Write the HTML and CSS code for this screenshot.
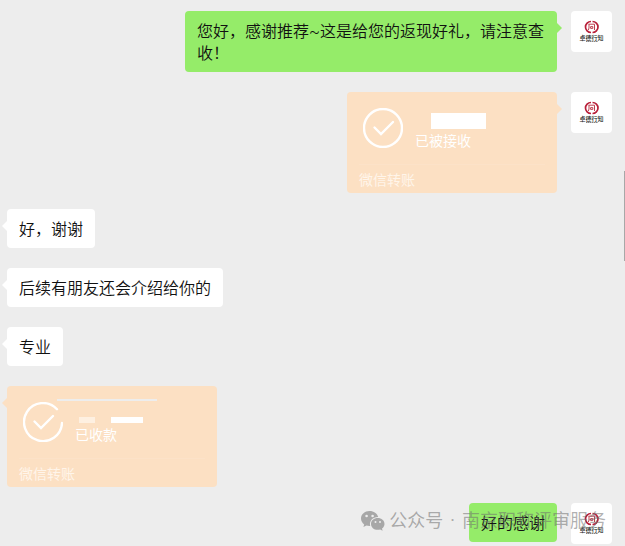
FILE: index.html
```html
<!DOCTYPE html>
<html lang="zh-CN">
<head>
  <meta charset="UTF-8">
  <meta name="viewport" content="width=device-width, initial-scale=1.0">
  <title>聊天记录</title>
  <link rel="stylesheet" href="styles.css">
</head>
<body>
  <svg class="defs" aria-hidden="true">
    <symbol id="logo" viewBox="0 0 41 41">
      <path d="M20 10.500a5.500 5.500 0 0 0 0 11M21.500 10.500a5.500 5.500 0 0 1 0 11" fill="none" stroke="#b8203a" stroke-width="1.700"/>
      <path d="M17.500 13.200h6v5.800M18 13.200v3.800l-.6 2M19.600 15.600h2.200v1.800h-2.200z" fill="none" stroke="#c04050" stroke-width="1"/>
      <text x="20.500" y="28.500" text-anchor="middle" class="logo-name">卓德行知</text>
      <path d="M15 30.500h12" stroke="#666" stroke-width=".8" stroke-dasharray="1.500 .4"/>
    </symbol>
  </svg>

  <main class="chat">
    <div class="row sent">
      <div class="bubble">您好，感谢推荐~这是给您的返现好礼，请注意查收！</div>
      <svg class="avatar"><use href="#logo"/></svg>
    </div>

    <div class="row sent transfer-row">
      <div class="transfer">
        <div class="transfer-main">
          <svg class="check" viewBox="0 0 40 40">
            <circle cx="20" cy="20" r="19"/>
            <path d="M11.500 19.500l6.500 6.500 12-12"/>
          </svg>
          <div class="info">
            <div class="amount"><span class="mask mask-large"></span></div>
            <div class="status">已被接收</div>
          </div>
        </div>
        <div class="transfer-foot">微信转账</div>
      </div>
      <svg class="avatar"><use href="#logo"/></svg>
    </div>

    <div class="row received">
      <div class="bubble">好，谢谢</div>
    </div>

    <div class="row received">
      <div class="bubble">后续有朋友还会介绍给你的</div>
    </div>

    <div class="row received">
      <div class="bubble">专业</div>
    </div>

    <div class="row received transfer-row">
      <div class="transfer">
        <span class="strip"></span>
        <div class="transfer-main">
          <svg class="check" viewBox="0 0 40 40">
            <path d="M34 7.200A19 19 0 1 0 39 21"/>
            <path d="M11.500 19.500l6.500 6.500 12-12"/>
          </svg>
          <div class="info">
            <div class="amount amount-split"><span class="mask mask-faint"></span><span class="mask mask-small"></span></div>
            <div class="status">已收款</div>
          </div>
        </div>
        <div class="transfer-foot">微信转账</div>
      </div>
    </div>

    <div class="row sent">
      <div class="bubble no-tail">好的感谢</div>
      <svg class="avatar"><use href="#logo"/></svg>
      <div class="watermark">
        <svg class="wechat" viewBox="0 0 24 20">
          <path fill-rule="evenodd" d="M8.500 0C3.800 0 0 3.300 0 7.500c0 2.400 1.300 4.500 3.200 5.900L2.400 16l3.100-1.600c1 .3 2 .5 3 .5h.7C8 10 11.800 6 17 6h.2C16.200 2.500 12.800 0 8.500 0zM5.600 3.700a1.300 1.300 0 1 1 0 2.600 1.300 1.300 0 0 1 0-2.600zM11.600 3.700a1.300 1.300 0 1 1 0 2.600 1.300 1.300 0 0 1 0-2.600z"/>
          <path fill-rule="evenodd" d="M16.700 7c-3.800 0-6.700 2.600-6.700 5.900s2.900 5.900 6.700 5.900c.9 0 1.700-.1 2.500-.4l2.400 1.300-.6-2.200c1.500-1.100 2.500-2.700 2.500-4.600C23.500 9.600 20.500 7 16.700 7zM14.500 10a1 1 0 1 1 0 2 1 1 0 0 1 0-2zM19 10a1 1 0 1 1 0 2 1 1 0 0 1 0-2z"/>
        </svg>
        <div class="watermark-text">
          <span>公众号</span>
          <span>·</span>
          <span>南京职称评审服务</span>
        </div>
      </div>
    </div>
    <div class="scroll-thumb"></div>
  </main>
</body>
</html>
```
FILE: styles.css
```css
* {
  box-sizing: border-box;
}
body {
  margin: 0;
  background: #ededed;
  color: #111;
  font-family: Roboto, "Noto Sans CJK SC", sans-serif;
  font-size: 16px;
  line-height: 22px;
}
.defs {
  display: none;
}
.chat {
  position: relative;
  padding: 11px 13px 2px 7px;
}
.row {
  position: relative;
  display: flex;
  align-items: flex-start;
  margin-bottom: 20px;
}
.row:nth-last-child(2) {
  margin-bottom: 0;
}
.transfer-row {
  margin-bottom: 16px;
}
.sent {
  justify-content: flex-end;
  gap: 14px;
}

/* message bubbles */
.bubble,
.transfer {
  position: relative;
  border-radius: 4px;
}
.bubble {
  max-width: 372px;
  padding: 10px 12px 7px;
  background: #fff;
  font-weight: 350;
}
.sent .bubble {
  background: #95ec69;
}
.bubble::after,
.transfer::after {
  content: "";
  position: absolute;
  top: 12px;
  border: 5px solid transparent;
}
.sent .bubble::after,
.sent .transfer::after {
  left: 100%;
  border-right-width: 0;
  border-left-color: #95ec69;
}
.sent .transfer::after {
  border-left-color: #fce0c3;
}
.received .bubble::after,
.received .transfer::after {
  right: 100%;
  border-left-width: 0;
  border-right-color: #fff;
}
.received .transfer::after {
  border-right-color: #fce0c3;
}
.sent .no-tail::after {
  display: none;
}

.avatar {
  flex: none;
  width: 41px;
  height: 41px;
  border-radius: 4px;
  background: #fff;
}
.logo-name {
  font-size: 6px;
  font-weight: 500;
  fill: #222;
}

/* transfer cards */
.transfer {
  width: 210px;
  background: #fce0c3;
  color: #fff;
  font-size: 14px;
  line-height: 20px;
}
.transfer-main {
  display: flex;
  gap: 12px;
  height: 72px;
  padding: 16px 16px 0;
}
.check {
  flex: none;
  width: 40px;
  height: 40px;
  fill: none;
  stroke: #fff;
  stroke-width: 2.4;
  stroke-linecap: round;
}
.info {
  padding-top: 5px;
}
.amount {
  display: flex;
  align-items: flex-end;
  height: 16px;
  margin-bottom: 2px;
  padding-left: 16px;
}
.amount-split {
  gap: 16px;
  padding-left: 4px;
}
.mask {
  height: 6px;
  background: #fff;
}
.mask-large {
  width: 55px;
  height: 16px;
}
.mask-faint {
  width: 16px;
  opacity: 0.5;
}
.mask-small {
  width: 32px;
}
.strip {
  position: absolute;
  top: 13px;
  left: 50px;
  width: 100px;
  height: 2px;
  background: #ededed;
}
.transfer-foot {
  margin: 0 12px;
  padding: 5px 0 3px;
  border-top: 1px solid #fce2c8;
  color: #fff5ea;
}

.watermark {
  position: absolute;
  top: 6px;
  right: 6px;
  display: flex;
  align-items: center;
  gap: 4px;
  color: rgba(110, 110, 110, 0.55);
  font-size: 18px;
  line-height: 24px;
  white-space: nowrap;
}
.watermark-text {
  display: flex;
  gap: 7px;
}
.wechat {
  width: 24px;
  height: 20px;
  fill: currentColor;
}
.scroll-thumb {
  position: absolute;
  top: 171px;
  right: 0;
  width: 1px;
  height: 90px;
  background: #a8a8a8;
}
```
